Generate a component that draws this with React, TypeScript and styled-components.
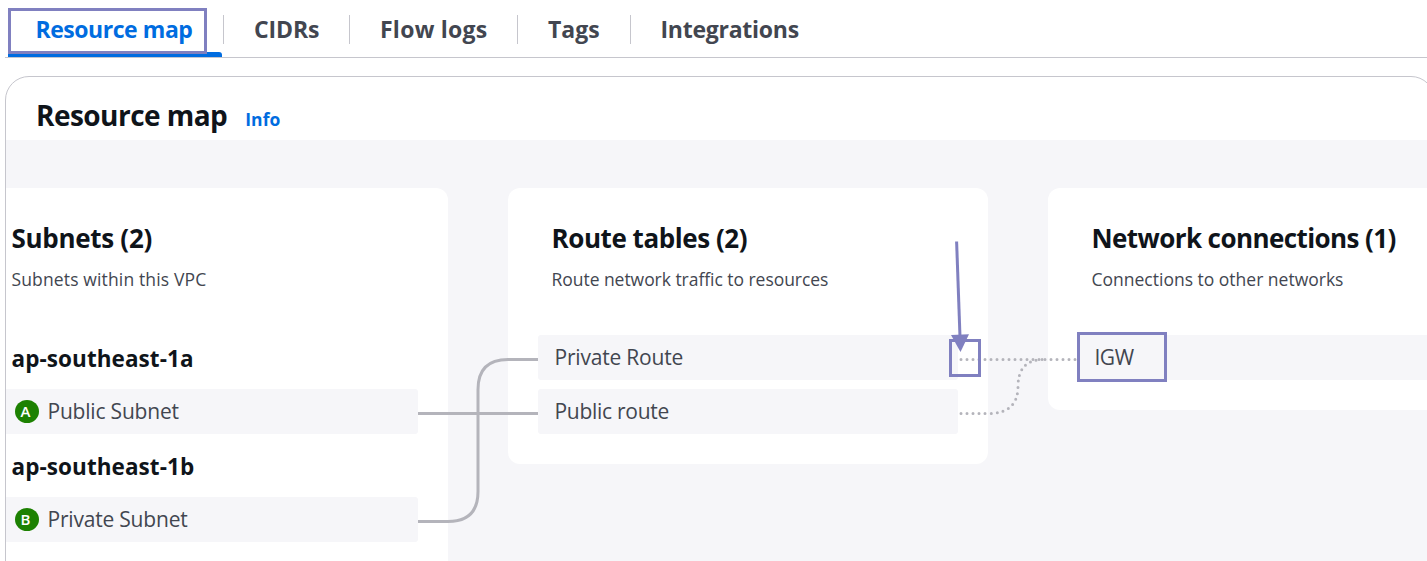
import React from 'react';
import styled, { createGlobalStyle } from 'styled-components';

const GlobalStyle = createGlobalStyle`
  *, *::before, *::after { box-sizing: border-box; }
  body {
    margin: 0;
    background: #ffffff;
    color: #0f141a;
    font-family: "Open Sans", "Noto Sans", sans-serif;
    overflow: hidden;
  }
  h2, h3, h4, p { margin: 0; }
`;

const Page = styled.div`
  position: relative;
  display: flex;
  flex-direction: column;
  gap: 18px;
  width: 1427px;
  height: 561px;
  overflow: hidden;
`;

const TabBar = styled.nav`
  flex: none;
  display: flex;
  height: 58px;
  margin-left: 5px;
  padding-left: 3px;
  border-bottom: 1px solid #c6c6cd;
`;

const Tab = styled.a<{ $width: number; $indent: number; $spacing: number; $active?: boolean }>`
  display: flex;
  align-items: center;
  justify-content: space-between;
  position: relative;
  width: ${(p) => p.$width}px;
  padding: 0 0 0 ${(p) => p.$indent}px;
  color: ${(p) => (p.$active ? '#006ce0' : '#424650')};
  font-size: 23px;
  font-weight: 700;
  letter-spacing: ${(p) => p.$spacing}px;
  white-space: nowrap;

  &::after {
    content: '';
    display: ${(p) => (p.$active ? 'block' : 'none')};
    position: absolute;
    left: 0;
    right: 2px;
    bottom: 0;
    height: 5px;
    border-radius: 0 3px 0 0;
    background: #006ce0;
  }
`;

const TabDivider = styled.span`
  width: 1px;
  height: 29px;
  margin-top: 2px;
  background: #c6c6cd;
`;

const Panel = styled.section`
  flex: none;
  display: flex;
  flex-direction: column;
  width: 1430px;
  height: 520px;
  margin-left: 5px;
  border: 1px solid #c6c6cd;
  border-radius: 24px;
  overflow: hidden;
`;

const PanelHeader = styled.header`
  flex: none;
  display: flex;
  align-items: baseline;
  gap: 18px;
  height: 63px;
  padding: 19px 0 0 30px;
`;

const PanelTitle = styled.h2`
  font-size: 28px;
  font-weight: 700;
  line-height: 38px;
  letter-spacing: -0.54px;
`;

const InfoLink = styled.a`
  color: #006ce0;
  font-size: 17.5px;
  font-weight: 700;
  letter-spacing: 0.05px;
`;

const Canvas = styled.div`
  flex: 1;
  display: flex;
  align-items: flex-start;
  gap: 60px;
  margin-left: -38px;
  padding-top: 48px;
  background: #f6f6f9;
`;

const Column = styled.article`
  flex: none;
  width: 480px;
  padding: 0 30px 30px;
  border-radius: 12px;
  background: #ffffff;
`;

const ColumnHeader = styled.div`
  display: flex;
  flex-direction: column;
  gap: 11px;
  height: 147px;
  padding: 32px 0 0 13.5px;
`;

const ColumnTitle = styled.h3<{ $spacing: number }>`
  font-size: 26px;
  font-weight: 700;
  line-height: 36px;
  letter-spacing: ${(p) => p.$spacing}px;
  white-space: nowrap;
`;

const ColumnText = styled.p<{ $spacing?: number }>`
  color: #424650;
  font-size: 17.5px;
  line-height: 24px;
  letter-spacing: ${(p) => p.$spacing ?? 0}px;
  white-space: nowrap;
`;

const Rows = styled.div`
  display: flex;
  flex-direction: column;
  gap: 9px;
`;

const Zone = styled.div`
  display: flex;
  flex-direction: column;
`;

const ZoneName = styled.h4`
  height: 54px;
  padding: 7px 0 0 13.5px;
  font-size: 22.5px;
  font-weight: 700;
  line-height: 34px;
  letter-spacing: 0.07px;
`;

const Resource = styled.div<{ $indent?: number }>`
  display: flex;
  align-items: center;
  gap: 8.5px;
  height: 45px;
  padding-left: ${(p) => p.$indent ?? 16.5}px;
  border-radius: 3px;
  background: #f6f6f9;
`;

const ResourceName = styled.span<{ $spacing?: number }>`
  padding-bottom: 2px;
  color: #424650;
  font-size: 21px;
  letter-spacing: ${(p) => p.$spacing ?? -0.2}px;
`;

const ZoneBadge = styled.span`
  display: flex;
  align-items: center;
  justify-content: center;
  width: 24px;
  height: 23px;
  padding: 0 3px 0 0;
  border-radius: 50%;
  background: #1d8102;
  color: #ffffff;
  font-size: 15px;
  font-weight: 600;
  line-height: 23px;
`;

const Overlay = styled.svg`
  position: absolute;
  top: 0;
  left: 0;
  pointer-events: none;
`;

const Highlight = styled.div<{ $x: number; $y: number; $w: number; $h: number }>`
  position: absolute;
  left: ${(p) => p.$x}px;
  top: ${(p) => p.$y}px;
  width: ${(p) => p.$w}px;
  height: ${(p) => p.$h}px;
  border: 3px solid #8080c0;
`;

const tabs = [
  { label: 'Resource map', width: 216, indent: 27.5, spacing: -0.46, active: true },
  { label: 'CIDRs', width: 126, indent: 30, spacing: -0.12 },
  { label: 'Flow logs', width: 168, indent: 30, spacing: 0.25 },
  { label: 'Tags', width: 113, indent: 30, spacing: 0 },
  { label: 'Integrations', width: 170, indent: 29.5, spacing: -0.26 },
];

const zones = [
  { name: 'ap-southeast-1a', badge: 'A', subnet: 'Public Subnet' },
  { name: 'ap-southeast-1b', badge: 'B', subnet: 'Private Subnet' },
];

export default function App() {
  return (
    <Page>
      <GlobalStyle />
      <TabBar>
        {tabs.map((tab, i) => (
          <Tab
            key={tab.label}
            $width={tab.width}
            $indent={tab.indent}
            $spacing={tab.spacing}
            $active={tab.active}
          >
            {tab.label}
            {i < tabs.length - 1 && <TabDivider />}
          </Tab>
        ))}
      </TabBar>

      <Panel>
        <PanelHeader>
          <PanelTitle>Resource map</PanelTitle>
          <InfoLink>Info</InfoLink>
        </PanelHeader>
        <Canvas>
          <Column>
            <ColumnHeader>
              <ColumnTitle $spacing={-0.3}>Subnets (2)</ColumnTitle>
              <ColumnText $spacing={0.14}>Subnets within this VPC</ColumnText>
            </ColumnHeader>
            <Rows>
              {zones.map((zone) => (
                <Zone key={zone.name}>
                  <ZoneName>{zone.name}</ZoneName>
                  <Resource $indent={17}>
                    <ZoneBadge>{zone.badge}</ZoneBadge>
                    <ResourceName>{zone.subnet}</ResourceName>
                  </Resource>
                </Zone>
              ))}
            </Rows>
          </Column>

          <Column>
            <ColumnHeader>
              <ColumnTitle $spacing={-0.44}>Route tables (2)</ColumnTitle>
              <ColumnText $spacing={-0.04}>Route network traffic to resources</ColumnText>
            </ColumnHeader>
            <Rows>
              <Resource>
                <ResourceName>Private Route</ResourceName>
              </Resource>
              <Resource>
                <ResourceName $spacing={-0.28}>Public route</ResourceName>
              </Resource>
            </Rows>
          </Column>

          <Column>
            <ColumnHeader>
              <ColumnTitle $spacing={-0.59}>Network connections (1)</ColumnTitle>
              <ColumnText>Connections to other networks</ColumnText>
            </ColumnHeader>
            <Rows>
              <Resource>
                <ResourceName $spacing={-0.5}>IGW</ResourceName>
              </Resource>
            </Rows>
          </Column>
        </Canvas>
      </Panel>

      <Overlay width="1427" height="561" fill="none">
        <g stroke="#b4b4bb" strokeWidth="3">
          <path d="M418 413.5H538" />
          <path d="M418 521.5H448Q478 521.5 478 491.5V389.5Q478 359.5 508 359.5H538" />
          <g strokeLinecap="round" strokeDasharray="0 6">
            <path d="M961 359.5H1077" />
            <path d="M961 413.5H988Q1018 413.5 1018 386.5Q1018 359.5 1044 359.5" />
          </g>
        </g>
      </Overlay>

      <Highlight $x={8} $y={8} $w={199} $h={46} />
      <Highlight $x={949} $y={339} $w={32} $h={38} />
      <Highlight $x={1077} $y={332} $w={90} $h={50} />
      <Overlay width="1427" height="561" fill="none">
        <path d="M956.6 241.5L960 337" stroke="#8080c0" strokeWidth="3" />
        <path d="M951 335L969 334.3L960.5 352Z" fill="#8080c0" />
      </Overlay>
    </Page>
  );
}
